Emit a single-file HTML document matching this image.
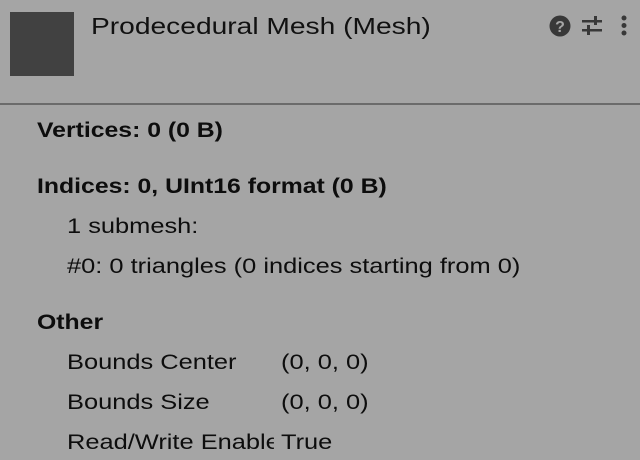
<!DOCTYPE html>
<html><head><style>
body{margin:0;width:640px;height:460px;background:#a5a5a5;overflow:hidden;position:relative;font-family:"Liberation Sans",sans-serif;color:#0d0d0d}
.sq{position:absolute;left:10px;top:12px;width:64px;height:64px;background:#414141}
.t{position:absolute;white-space:nowrap;font-size:21px;line-height:24px;transform:scaleX(1.21);transform-origin:0 0}
.b{font-weight:bold;transform:scaleX(1.18)}
.sep{position:absolute;left:0;top:103px;width:640px;height:2px;background:#6b6b6b}
</style></head><body>
<div class="sq"></div>
<div class="t" style="left:91px;top:12px;font-size:23px;line-height:28px;color:#111;transform:scaleX(1.225)">Prodecedural Mesh (Mesh)</div>
<svg style="position:absolute;left:548px;top:14px" width="90" height="24" viewBox="0 0 90 24">
<circle cx="12" cy="12" r="10.5" fill="#383838"/>
<text x="12" y="18" font-family="Liberation Sans" font-weight="bold" font-size="16" fill="#a5a5a5" text-anchor="middle">?</text>
<rect x="34" y="6" width="20" height="2.5" fill="#383838"/><rect x="46" y="2" width="3" height="9" fill="#383838"/>
<rect x="34" y="15" width="20" height="2.5" fill="#383838"/><rect x="39" y="11" width="3" height="10" fill="#383838"/>
<circle cx="76" cy="4" r="2.5" fill="#383838"/><circle cx="76" cy="11.5" r="2.5" fill="#383838"/><circle cx="76" cy="19" r="2.5" fill="#383838"/>
</svg>
<div class="sep"></div>
<div class="t b" style="left:37px;top:119px">Vertices: 0 (0 B)</div>
<div class="t b" style="left:37px;top:175px">Indices: 0, UInt16 format (0 B)</div>
<div class="t" style="left:67px;top:215px">1 submesh:</div>
<div class="t" style="left:67px;top:255px">#0: 0 triangles (0 indices starting from 0)</div>
<div class="t b" style="left:37px;top:311px">Other</div>
<div class="t" style="left:67px;top:351px">Bounds Center</div>
<div class="t" style="left:281px;top:351px">(0, 0, 0)</div>
<div class="t" style="left:67px;top:391px">Bounds Size</div>
<div class="t" style="left:281px;top:391px">(0, 0, 0)</div>
<div class="t" style="left:67px;top:431px;width:171px;overflow:hidden">Read/Write Enabled</div>
<div class="t" style="left:281px;top:431px">True</div>
</body></html>
